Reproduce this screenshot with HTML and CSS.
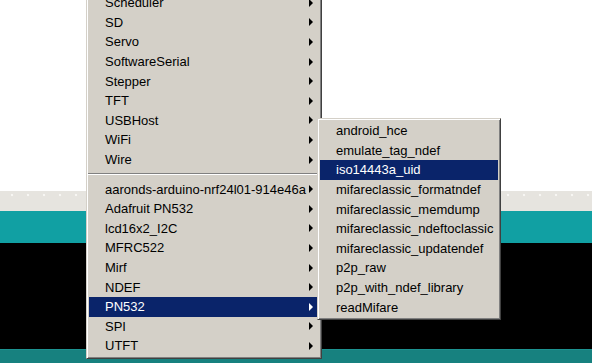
FILE: index.html
```html
<!DOCTYPE html>
<html>
<head>
<meta charset="utf-8">
<link rel="stylesheet" href="styles.css">
</head>
<body>
<div class="ide">
  <div class="editor"></div>
  <div class="divider"></div>
  <div class="status"></div>
  <div class="console"></div>
  <div class="footer"></div>
</div>

<div class="menu main">
  <div class="item"><span class="label">Scheduler</span><span class="arrow"></span></div>
  <div class="item"><span class="label">SD</span><span class="arrow"></span></div>
  <div class="item"><span class="label">Servo</span><span class="arrow"></span></div>
  <div class="item"><span class="label">SoftwareSerial</span><span class="arrow"></span></div>
  <div class="item"><span class="label">Stepper</span><span class="arrow"></span></div>
  <div class="item"><span class="label">TFT</span><span class="arrow"></span></div>
  <div class="item"><span class="label">USBHost</span><span class="arrow"></span></div>
  <div class="item"><span class="label">WiFi</span><span class="arrow"></span></div>
  <div class="item"><span class="label">Wire</span><span class="arrow"></span></div>
  <div class="sep"></div>
  <div class="item"><span class="label">aaronds-arduino-nrf24l01-914e46a</span><span class="arrow"></span></div>
  <div class="item"><span class="label">Adafruit PN532</span><span class="arrow"></span></div>
  <div class="item"><span class="label">lcd16x2_I2C</span><span class="arrow"></span></div>
  <div class="item"><span class="label">MFRC522</span><span class="arrow"></span></div>
  <div class="item"><span class="label">Mirf</span><span class="arrow"></span></div>
  <div class="item"><span class="label">NDEF</span><span class="arrow"></span></div>
  <div class="item active"><span class="label">PN532</span><span class="arrow"></span></div>
  <div class="item"><span class="label">SPI</span><span class="arrow"></span></div>
  <div class="item"><span class="label">UTFT</span><span class="arrow"></span></div>
</div>

<div class="menu sub">
  <div class="item"><span class="label">android_hce</span></div>
  <div class="item"><span class="label">emulate_tag_ndef</span></div>
  <div class="item active"><span class="label">iso14443a_uid</span></div>
  <div class="item"><span class="label">mifareclassic_formatndef</span></div>
  <div class="item"><span class="label">mifareclassic_memdump</span></div>
  <div class="item"><span class="label">mifareclassic_ndeftoclassic</span></div>
  <div class="item"><span class="label">mifareclassic_updatendef</span></div>
  <div class="item"><span class="label">p2p_raw</span></div>
  <div class="item"><span class="label">p2p_with_ndef_library</span></div>
  <div class="item"><span class="label">readMifare</span></div>
</div>
</body>
</html>
```

FILE: styles.css
```css
html, body {
  margin: 0;
  padding: 0;
  width: 592px;
  height: 363px;
  overflow: hidden;
  background: #ffffff;
  font-family: "Liberation Sans", Arial, sans-serif;
}

.ide {
  display: flex;
  flex-direction: column;
  width: 592px;
  height: 363px;
}

.editor {
  height: 191px;
  background: #ffffff;
}

.divider {
  height: 20px;
  background-color: #e6e4df;
  background-image: radial-gradient(circle, #f7f6f3 1px, transparent 1.6px);
  background-size: 16px 20px;
  background-position: 4px -6px;
  background-repeat: repeat-x;
}

.status {
  height: 32px;
  background: #11a0a3;
}

.console {
  height: 106px;
  background: #000000;
}

.footer {
  flex: 1;
  background: #17817f;
  border-top: 1px solid #1c9290;
}

.menu {
  position: absolute;
  box-sizing: border-box;
  background: #d4d0c8;
  border: 1px solid;
  border-color: #d4d0c8 #404040 #404040 #d4d0c8;
  box-shadow: inset 1px 1px #ffffff, inset -1px -1px #808080;
  padding: 2px;
  display: flex;
  flex-direction: column;
  font-size: 13px;
  color: #000000;
}

.main {
  left: 86px;
  top: -10px;
  width: 236px;
}

.sub {
  left: 317px;
  top: 118px;
  width: 184px;
}

.item {
  height: 19.6px;
  display: flex;
  align-items: center;
  padding-left: 16px;
  padding-right: 6px;
  white-space: nowrap;
}

.label {
  flex: 1;
}

.item.active {
  background: #0a246a;
  color: #ffffff;
}

.arrow {
  width: 0;
  height: 0;
  border-left: 4px solid #000000;
  border-top: 4px solid transparent;
  border-bottom: 4px solid transparent;
}

.item.active .arrow {
  border-left-color: #ffffff;
}

.sep {
  height: 10px;
  display: flex;
  flex-direction: column;
  justify-content: center;
  margin: 0 -1px;
}

.sep::before {
  content: "";
  display: block;
  height: 1px;
  background: #808080;
  border-bottom: 1px solid #ffffff;
}
```
